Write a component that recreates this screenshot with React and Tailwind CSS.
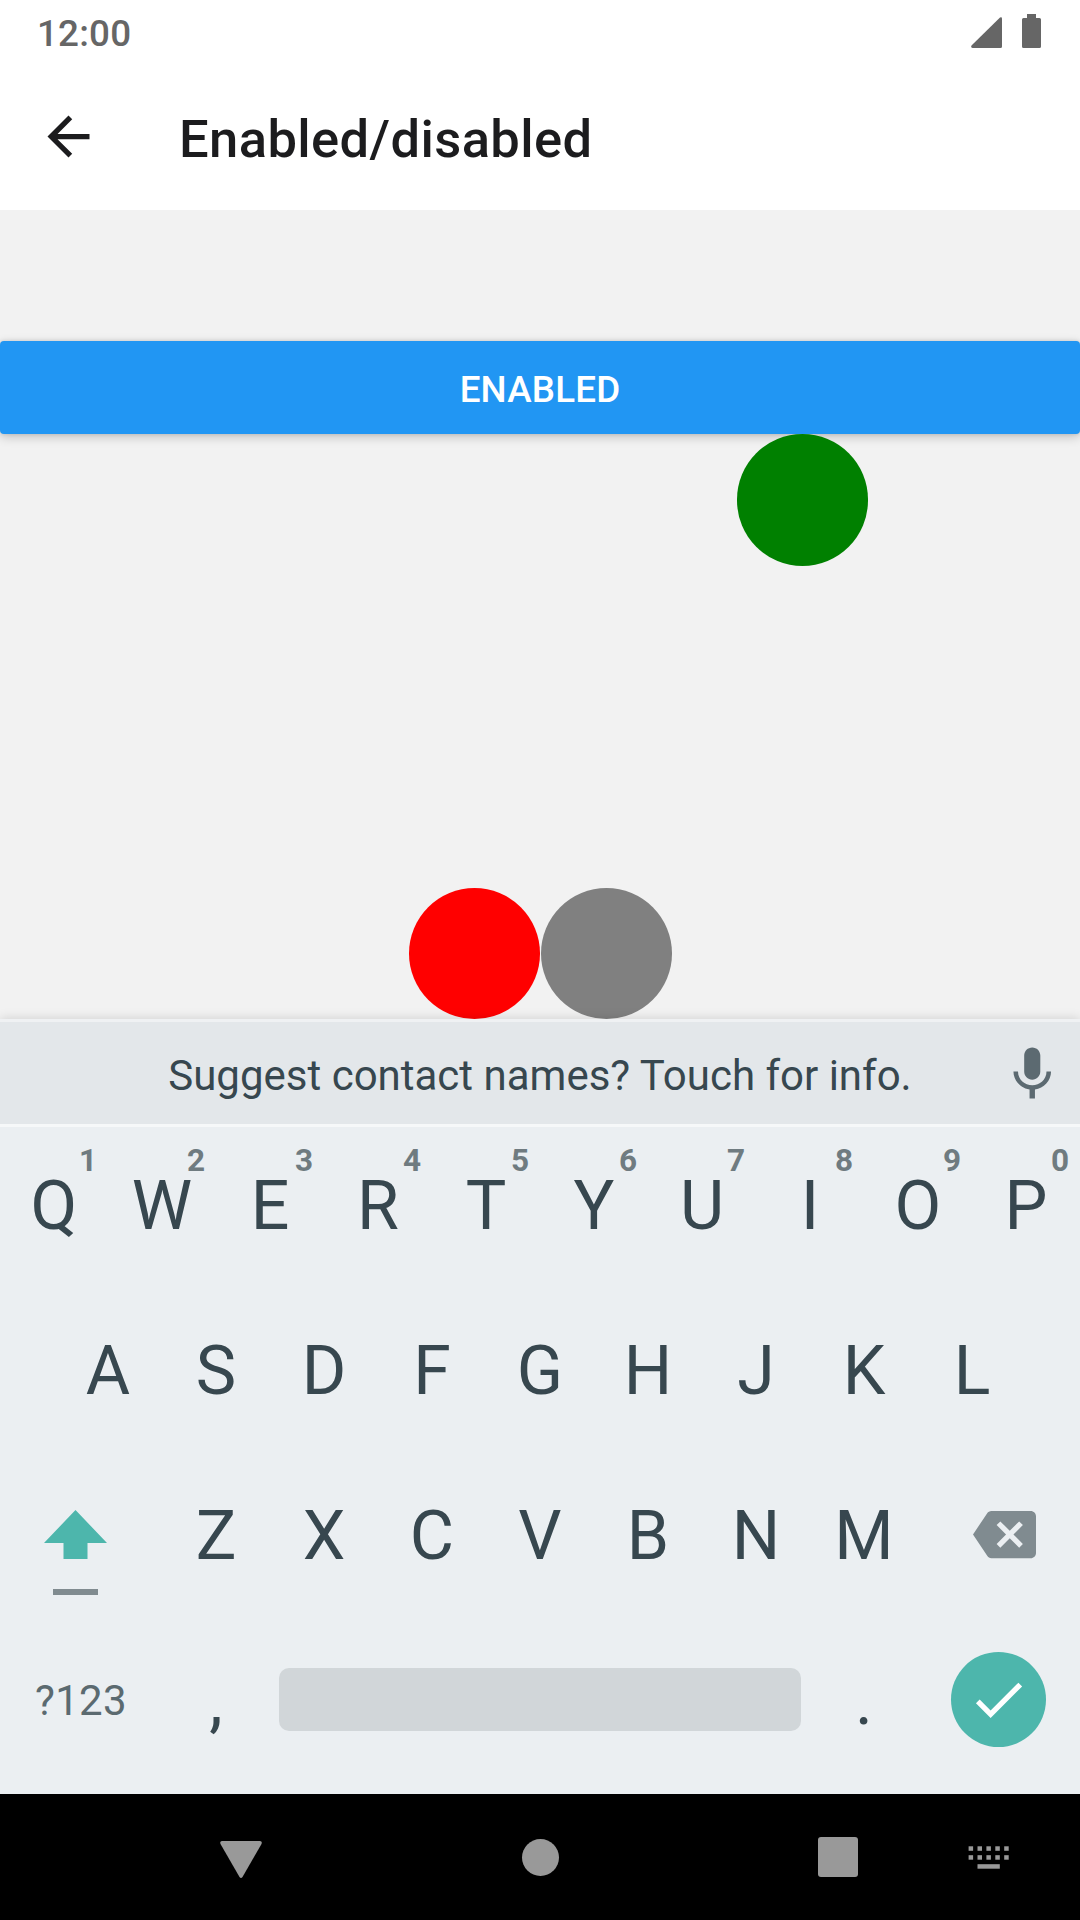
const TOP_ROW = [
  ["Q", "1"], ["W", "2"], ["E", "3"], ["R", "4"], ["T", "5"],
  ["Y", "6"], ["U", "7"], ["I", "8"], ["O", "9"], ["P", "0"],
];

function Key({ label, hint }) {
  return (
    <div className="relative flex h-[165px] w-[108px] items-center justify-center self-start pb-2 text-[68px] leading-[80px]">
      <span>{label}</span>
      {hint && (
        <span className="absolute right-[11px] top-[15px] text-[31.5px] font-bold leading-[38px] text-[#6f7b80]">
          {hint}
        </span>
      )}
    </div>
  );
}

function StatusBar() {
  return (
    <div className="flex h-[63px] items-start justify-between pl-[37px] pr-[39px] text-[#666]">
      <span className="mt-3 text-[36.75px] font-medium leading-[44px] tracking-[0.2px]">12:00</span>
      <div className="mt-[14px] flex items-end gap-5">
        <svg width="31" height="31" viewBox="0 0 31 31" fill="currentColor">
          <path d="M29 .5Q31-.4 31 1.700V29.500Q31 31 29.500 31H1.500Q-.6 30.600.5 28.500Z" />
        </svg>
        <svg width="19" height="34" viewBox="0 0 19 34" fill="currentColor">
          <path d="M5 0H14V4H17.500Q19 4 19 5.500V32.500Q19 34 17.500 34H1.500Q0 34 0 32.500V5.500Q0 4 1.500 4H5Z" />
        </svg>
      </div>
    </div>
  );
}

function Header() {
  return (
    <header className="h-[210px] bg-white">
      <StatusBar />
      <div className="flex h-[147px] items-center pl-[37px] text-[#1c1c1e]">
        <svg width="63" height="63" viewBox="0 0 24 24" fill="currentColor">
          <path d="M20 11H7.830l5.590-5.590L12 4l-8 8 8 8 1.410-1.410L7.830 13H20v-2z" />
        </svg>
        <h1 className="ml-[79px] mt-[5px] text-[52.5px] font-medium leading-[62px] tracking-[0.4px]">Enabled/disabled</h1>
      </div>
    </header>
  );
}

function Content() {
  return (
    <main className="flex h-[809px] flex-col bg-[#f2f2f2] pt-[131px]">
      <button className="flex h-[93px] w-full shrink-0 items-center justify-center rounded-[4px] bg-[#2196f3] pt-[5px] text-[36.75px] font-medium leading-[44px] tracking-[0.2px] text-white shadow-[0_3px_11px_rgba(0,0,0,0.2),0_0_4px_rgba(0,0,0,0.12)]">
        ENABLED
      </button>
      <div className="relative ml-[737px] h-[132px] w-[131px] rounded-full bg-[#008000]" />
      <div className="mt-auto flex justify-center gap-px pl-px">
        <div className="size-[131px] rounded-full bg-[#ff0000]" />
        <div className="size-[131px] rounded-full bg-[#808080]" />
      </div>
    </main>
  );
}

function Keyboard() {
  return (
    <section className="relative h-[775px] bg-[#ebeff2] text-[#37474f] shadow-[0_-1px_10px_rgba(0,0,0,0.13)]">
      <div className="flex h-[108px] items-center border-y-[3px] border-t-[#eff1f3] border-b-[#f6f8f9] bg-[#e3e7ea]">
        <span className="w-full pt-[5px] text-center text-[42px] leading-[50px]">
          Suggest contact names? Touch for info.
        </span>
        <svg className="absolute right-[16px] top-[23px] text-[#5c6a71]" width="64.500" height="64.500" viewBox="0 0 24 24" fill="currentColor">
          <path d="M12 14c1.660 0 2.990-1.340 2.990-3L15 5c0-1.660-1.340-3-3-3S9 3.340 9 5v6c0 1.660 1.340 3 3 3zm5.300-3c0 3-2.540 5.100-5.300 5.100S6.700 14 6.700 11H5c0 3.410 2.720 6.230 6 6.720V21h2v-3.280c3.280-.48 6-3.300 6-6.720h-1.700z" />
        </svg>
      </div>
      <div className="flex">
        {TOP_ROW.map(([label, hint]) => <Key key={label} label={label} hint={hint} />)}
      </div>
      <div className="flex justify-center">
        {[..."ASDFGHJKL"].map((label) => <Key key={label} label={label} />)}
      </div>
      <div className="flex">
        <div className="flex w-[162px] flex-col pl-[44px] pt-[53px]">
          <svg width="63" height="49" viewBox="0 0 63 49" fill="#4db6ac">
            <path d="M31.500 0 63 33H43.500V49H19.500V33H0Z" />
          </svg>
          <div className="ml-[9px] mt-[30px] h-[5.500px] w-[45px] bg-[#808b90]" />
        </div>
        {[..."ZXCVBNM"].map((label) => <Key key={label} label={label} />)}
        <div className="flex w-[162px] pl-[55px] pt-[46px]">
          <svg width="63" height="63" viewBox="0 0 24 24" fill="#808b90">
            <path d="M22 3H7c-.69 0-1.230.35-1.590.88L0 12l5.410 8.110c.36.53.9.89 1.590.89h15c1.100 0 2-.9 2-2V5c0-1.100-.9-2-2-2zm-3 12.590L17.590 17 14 13.410 10.410 17 9 15.590 12.590 12 9 8.410 10.410 7 14 10.590 17.590 7 19 8.410 15.410 12 19 15.590z" />
          </svg>
        </div>
      </div>
      <div className="flex h-[155px] items-center">
        <span className="w-[162px] pl-[35px] pt-[2px] text-[42px] leading-[50px] tracking-[0.3px] text-[#5b6a70]">?123</span>
        <Key label="," />
        <div className="ml-[9px] mr-[9px] h-[63px] w-[522px] rounded-[10px] bg-[#d1d6d9]" />
        <Key label="." />
        <div className="ml-[33px] flex size-[95px] items-center justify-center rounded-full bg-[#4db6ac]">
          <svg width="63" height="63" viewBox="0 0 24 24" fill="white">
            <path d="M9 16.170L4.830 12l-1.420 1.410L9 19 21 7l-1.410-1.410z" />
          </svg>
        </div>
      </div>
    </section>
  );
}

function NavigationBar() {
  return (
    <nav className="relative flex h-[126px] bg-black pl-[220px] text-[#999]">
      <svg className="mt-[47px]" width="42" height="37" viewBox="0 0 42 37" fill="currentColor">
        <path d="M2 0H40Q42.500 0 41.500 3L22.500 36Q21 38 19.500 36L.5 3Q-.5 0 2 0Z" />
      </svg>
      <div className="ml-[260px] mt-[45px] size-[37px] rounded-full bg-[#999]" />
      <div className="ml-[259px] mt-[43px] size-[40px] rounded-[3px] bg-[#999]" />
      <svg className="ml-[110px] mt-[52px]" width="42" height="23" viewBox="0 0 42 23" fill="currentColor">
        {[0.3, 9.2].map((y) => [0.6, 9.500, 18.400, 27.300, 36.200].map((x) => <rect key={`${x}-${y}`} x={x} y={y} width="4.500" height="4.500" />))}
        <rect x="9.500" y="18.200" width="22.300" height="4.500" />
      </svg>
    </nav>
  );
}

export default function App() {
  return (
    <div className="h-[1920px] w-[1080px] overflow-hidden bg-white font-['Roboto',sans-serif]">
      <Header />
      <Content />
      <Keyboard />
      <NavigationBar />
    </div>
  );
}
